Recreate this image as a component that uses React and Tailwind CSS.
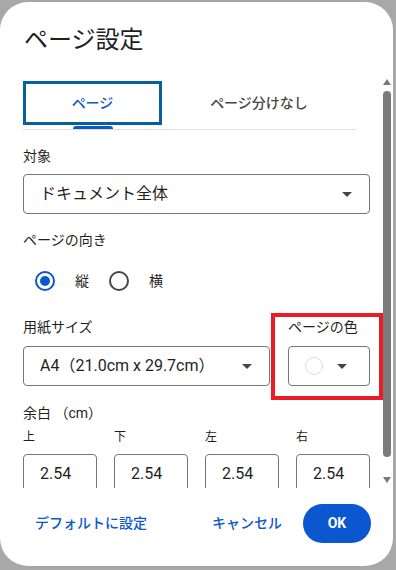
import React from "react";

const font = { fontFamily: 'Roboto, "Noto Sans CJK JP", sans-serif' };

function Caret() {
  return (
    <svg width="10" height="5" viewBox="0 0 10 5" className="shrink-0">
      <path d="M0 0 L10 0 L5 5 Z" fill="#444746" />
    </svg>
  );
}

function Radio({ checked }) {
  return checked ? (
    <div className="w-[20px] h-[20px] rounded-full border-2 border-[#0b57d0] flex items-center justify-center">
      <div className="w-[10px] h-[10px] rounded-full bg-[#0b57d0]" />
    </div>
  ) : (
    <div className="w-[20px] h-[20px] rounded-full border-2 border-[#444746]" />
  );
}

function MarginInput({ label }) {
  return (
    <div className="flex flex-col w-[74px]">
      <div className="text-[12px] leading-[16px] text-[#1f1f1f]">{label}</div>
      <div className="mt-[9px] h-[40px] border border-[#747775] rounded-[4px] pl-[16px] flex items-center text-[16px] text-[#1f1f1f]">
        2.54
      </div>
    </div>
  );
}

export default function App() {
  return (
    <div className="relative w-[396px] h-[570px] bg-[#a8a8a8] pt-[2px] overflow-hidden" style={font}>
      <div className="w-[393px] h-[564px] bg-white rounded-[28px] flex flex-col overflow-hidden">
        {/* header */}
        <div className="h-[74px] shrink-0 pl-[24px] pt-[24px]">
          <div className="text-[24px] leading-[28px] text-[#1f1f1f]">ページ設定</div>
        </div>

        {/* scroll area */}
        <div className="h-[412px] shrink-0 flex">
          <div className="w-[370px] pl-[23px] overflow-hidden">
            <div className="pt-[5px] flex flex-col">
              {/* tabs */}
              <div className="w-[333px] flex border-b border-[#e0e0e0]">
                <div className="w-[139px] h-[48px] flex flex-col">
                  <div className="h-[44px] border-[3px] border-[#03619b] flex items-center justify-center text-[14px] font-medium text-[#0b57d0]">
                    ページ
                  </div>
                  <div className="mt-[1px] h-[3px] w-[40px] self-center ml-[1px] rounded-t-[3px] bg-[#0b57d0]" />
                </div>
                <div className="flex-1 h-[48px] flex items-center justify-center pb-[3px] text-[14px] font-medium text-[#444746]">
                  ページ分けなし
                </div>
              </div>

              {/* target */}
              <div className="mt-[16px] text-[14px] leading-[20px] text-[#1f1f1f]">対象</div>
              <div className="mt-[8px] w-[347px] h-[40px] border border-[#747775] rounded-[4px] flex items-center justify-between pl-[16px] pr-[17px]">
                <span className="text-[16px] text-[#1f1f1f]">ドキュメント全体</span>
                <Caret />
              </div>

              {/* orientation */}
              <div className="mt-[16px] text-[14px] leading-[20px] text-[#1f1f1f]">ページの向き</div>
              <div className="mt-[21px] ml-[12px] h-[20px] flex items-center">
                <Radio checked />
                <span className="ml-[20px] text-[14px] text-[#1f1f1f]">縦</span>
                <div className="ml-[20px]">
                  <Radio />
                </div>
                <span className="ml-[20px] text-[14px] text-[#1f1f1f]">横</span>
              </div>

              {/* paper size + page color */}
              <div className="mt-[26px] flex gap-[18px]">
                <div className="w-[247px] flex flex-col">
                  <div className="text-[14px] leading-[20px] text-[#1f1f1f]">用紙サイズ</div>
                  <div className="mt-[9px] h-[40px] border border-[#747775] rounded-[4px] flex items-center justify-between pl-[16px] pr-[17px]">
                    <span className="text-[16px] text-[#1f1f1f]">A4（21.0cm x 29.7cm）</span>
                    <Caret />
                  </div>
                </div>
                <div className="w-[82px] flex flex-col">
                  <div className="text-[14px] leading-[20px] text-[#1f1f1f]">ページの色</div>
                  <div className="mt-[9px] h-[40px] border border-[#747775] rounded-[4px] flex items-center pl-[16px]">
                    <div className="w-[18px] h-[18px] rounded-full border border-[#dadce0] bg-white" />
                    <div className="ml-[14px] flex">
                      <Caret />
                    </div>
                  </div>
                </div>
              </div>

              {/* margins */}
              <div className="mt-[17px] text-[14px] leading-[20px] text-[#1f1f1f]">余白 （cm）</div>
              <div className="mt-[6px] flex gap-[17px]">
                <MarginInput label="上" />
                <MarginInput label="下" />
                <MarginInput label="左" />
                <MarginInput label="右" />
              </div>
            </div>
          </div>

          {/* scrollbar */}
          <div className="ml-[13px] w-[8px] flex flex-col items-center pt-[3px]">
            <svg width="8" height="6" viewBox="0 0 8 6">
              <path d="M0 6 L8 6 L4 0 Z" fill="#7a7a7a" />
            </svg>
            <div className="mt-[6px] w-[8px] h-[366px] rounded-full bg-[#7b7b7b]" />
            <svg width="8" height="6" viewBox="0 0 8 6" className="mt-[20px]">
              <path d="M0 0 L8 0 L4 6 Z" fill="#7a7a7a" />
            </svg>
          </div>
        </div>

        {/* footer */}
        <div className="flex items-start pt-[16px] pl-[23px] pr-[22px]">
          <button className="h-[39px] px-[12px] flex items-center text-[14px] font-medium text-[#0b57d0]">
            デフォルトに設定
          </button>
          <div className="flex-1" />
          <button className="h-[39px] px-[12px] flex items-center text-[14px] font-medium text-[#0b57d0]">
            キャンセル
          </button>
          <button className="ml-[9px] w-[68px] h-[39px] rounded-full bg-[#0b57d0] text-white text-[14px] font-bold flex items-center justify-center">
            OK
          </button>
        </div>
      </div>

      {/* annotation highlight */}
      <div className="absolute left-[271px] top-[313px] w-[112px] h-[87px] border-4 border-[#ec1c24]" />
    </div>
  );
}
